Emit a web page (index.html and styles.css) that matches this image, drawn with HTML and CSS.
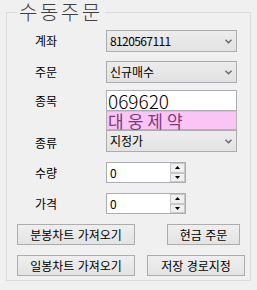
FILE: index.html
```html
<!DOCTYPE html>
<html lang="ko">
<head>
  <meta charset="UTF-8">
  <title>수동주문</title>
  <link rel="stylesheet" href="styles.css">
</head>
<body>
<fieldset class="group">
  <legend class="group-title">수동주문</legend>

  <div class="row row-first">
    <span class="label">계좌</span>
    <div class="combo">
      <span class="combo-text num">8120567111</span>
      <svg class="chev" width="7" height="5" viewBox="0 0 7 5"><path d="M0.5 0.8 L3.5 3.8 L6.5 0.8" fill="none" stroke="#666" stroke-width="1.4"/></svg>
    </div>
  </div>

  <div class="row row-gap9">
    <span class="label">주문</span>
    <div class="combo">
      <span class="combo-text">신규매수</span>
      <svg class="chev" width="7" height="5" viewBox="0 0 7 5"><path d="M0.5 0.8 L3.5 3.8 L6.5 0.8" fill="none" stroke="#666" stroke-width="1.4"/></svg>
    </div>
  </div>

  <div class="row row-gap7">
    <span class="label">종목</span>
    <div class="code-box">069620</div>
  </div>
  <div class="row">
    <span class="label"></span>
    <div class="name-box">대웅제약</div>
  </div>
  <div class="row">
    <span class="label label-low">종류</span>
    <div class="combo">
      <span class="combo-text">지정가</span>
      <svg class="chev" width="7" height="5" viewBox="0 0 7 5"><path d="M0.5 0.8 L3.5 3.8 L6.5 0.8" fill="none" stroke="#666" stroke-width="1.4"/></svg>
    </div>
  </div>

  <div class="row row-gap10">
    <span class="label">수량</span>
    <div class="spin">
      <span class="spin-text num">0</span>
      <div class="spin-btns">
        <div class="spin-btn"><svg width="5" height="3" viewBox="0 0 5 3"><path d="M0 3 L2.5 0 L5 3 Z" fill="#000"/></svg></div>
        <div class="spin-btn"><svg width="5" height="3" viewBox="0 0 5 3"><path d="M0 0 L2.5 3 L5 0 Z" fill="#000"/></svg></div>
      </div>
    </div>
  </div>

  <div class="row row-gap10">
    <span class="label">가격</span>
    <div class="spin">
      <span class="spin-text num">0</span>
      <div class="spin-btns">
        <div class="spin-btn"><svg width="5" height="3" viewBox="0 0 5 3"><path d="M0 3 L2.5 0 L5 3 Z" fill="#000"/></svg></div>
        <div class="spin-btn"><svg width="5" height="3" viewBox="0 0 5 3"><path d="M0 0 L2.5 3 L5 0 Z" fill="#000"/></svg></div>
      </div>
    </div>
  </div>

  <div class="btn-row row-gap10">
    <button class="btn btn-chart">분봉차트 가져오기</button>
    <button class="btn btn-cash">현금 주문</button>
  </div>
  <div class="btn-row row-gap10">
    <button class="btn btn-chart">일봉차트 가져오기</button>
    <button class="btn btn-path">저장 경로지정</button>
  </div>
</fieldset>
</body>
</html>
```

FILE: styles.css
```css
body {
  margin: 0;
  background-color: #f0f0f0;
  font-family: "Noto Sans CJK KR", "Noto Sans", sans-serif;
  font-size: 12px;
  color: #000;
}

.group {
  box-sizing: border-box;
  margin: 0 6px;
  padding: 0;
  height: 281px;
  border: 1px solid #dcdcdc;
}

.group-title {
  margin-left: 10px;
  padding: 0 2px;
  font-size: 20px;
  line-height: 24px;
  font-weight: 300;
  letter-spacing: 2.5px;
  color: #404040;
}

.row {
  display: flex;
  align-items: center;
}
.row-first { margin-top: 6px; }
.row-gap7 { margin-top: 7px; }
.row-gap9 { margin-top: 9px; }
.row-gap10 { margin-top: 10px; }

.label {
  width: 71px;
  padding-left: 28px;
  line-height: 14px;
}
.label-low { padding-top: 4px; }

.num { letter-spacing: -0.6px; }

.combo {
  box-sizing: border-box;
  width: 131px;
  height: 22px;
  border: 1px solid #acacac;
  background: linear-gradient(#ececec, #e2e2e2);
  display: flex;
  align-items: center;
  justify-content: space-between;
  padding: 0 3px;
}
.combo-text { line-height: 14px; }
.chev { margin-right: 1px; }

.code-box {
  box-sizing: border-box;
  width: 131px;
  height: 21px;
  border: 1px solid #abadb3;
  background-color: #fff;
  padding-left: 1px;
  font-size: 19px;
  font-weight: 300;
  line-height: 19px;
}

.name-box {
  box-sizing: border-box;
  width: 131px;
  height: 19px;
  border: 1px solid #b4b4b4;
  border-top-color: #c8c8c8;
  background-color: #fac5f5;
  padding-left: 1px;
  font-size: 17px;
  line-height: 17px;
  letter-spacing: 4px;
  color: #7a3a7a;
}

.spin {
  box-sizing: border-box;
  width: 80px;
  height: 21px;
  border: 1px solid #abadb3;
  background-color: #fff;
  display: flex;
  align-items: center;
  justify-content: space-between;
  padding-left: 3px;
}
.spin-text { line-height: 14px; }
.spin-btns {
  display: flex;
  flex-direction: column;
  width: 15px;
  height: 19px;
}
.spin-btn {
  box-sizing: border-box;
  flex: 1;
  display: flex;
  align-items: center;
  justify-content: center;
  border: 1px solid #c8c8c8;
  background-color: #f0f0f0;
}

.btn-row {
  display: flex;
}
.btn {
  box-sizing: border-box;
  height: 21px;
  border: 1px solid #adadad;
  background: linear-gradient(#efefef, #e3e3e3);
  font-family: "Noto Sans CJK KR", "Noto Sans", sans-serif;
  font-size: 12px;
  line-height: 14px;
  padding: 0;
  color: #000;
}
.btn-chart { width: 118px; margin-left: 10px; }
.btn-cash { width: 73px; margin-left: 32px; }
.btn-path { width: 98px; margin-left: 12px; }
```
